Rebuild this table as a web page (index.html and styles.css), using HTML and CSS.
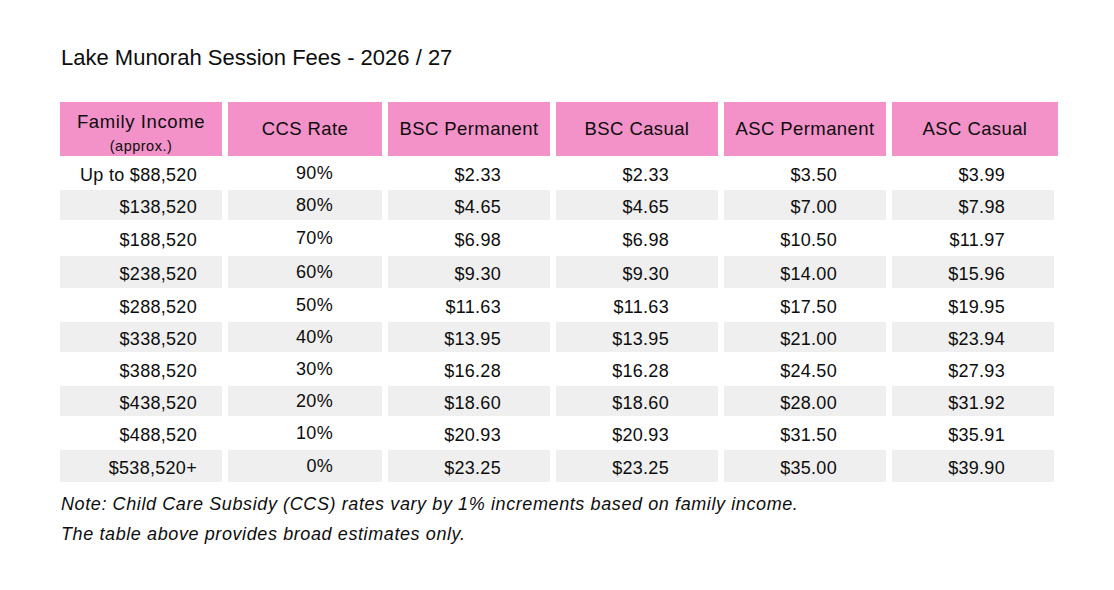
FILE: index.html
```html
<!DOCTYPE html>
<html lang="en">
<head>
<meta charset="utf-8">
<title>Lake Munorah Session Fees - 2026 / 27</title>
<link rel="stylesheet" href="styles.css">
</head>
<body>
<main class="page">
  <h1 class="title">Lake Munorah Session Fees - 2026 / 27</h1>

  <div class="fees">
    <div class="row head">
      <div class="cell hd income"><span class="hd-main">Family Income</span><span class="hd-sub">(approx.)</span></div>
      <div class="cell hd">CCS Rate</div>
      <div class="cell hd">BSC Permanent</div>
      <div class="cell hd">BSC Casual</div>
      <div class="cell hd">ASC Permanent</div>
      <div class="cell hd">ASC Casual</div>
    </div>

    <div class="row">
      <div class="cell inc">Up to $88,520</div><div class="cell rate">90%</div>
      <div class="cell">$2.33</div><div class="cell">$2.33</div><div class="cell">$3.50</div><div class="cell">$3.99</div>
    </div>
    <div class="row alt">
      <div class="cell inc">$138,520</div><div class="cell rate">80%</div>
      <div class="cell">$4.65</div><div class="cell">$4.65</div><div class="cell">$7.00</div><div class="cell">$7.98</div>
    </div>
    <div class="row">
      <div class="cell inc">$188,520</div><div class="cell rate">70%</div>
      <div class="cell">$6.98</div><div class="cell">$6.98</div><div class="cell">$10.50</div><div class="cell">$11.97</div>
    </div>
    <div class="row alt">
      <div class="cell inc">$238,520</div><div class="cell rate">60%</div>
      <div class="cell">$9.30</div><div class="cell">$9.30</div><div class="cell">$14.00</div><div class="cell">$15.96</div>
    </div>
    <div class="row">
      <div class="cell inc">$288,520</div><div class="cell rate">50%</div>
      <div class="cell">$11.63</div><div class="cell">$11.63</div><div class="cell">$17.50</div><div class="cell">$19.95</div>
    </div>
    <div class="row alt">
      <div class="cell inc">$338,520</div><div class="cell rate">40%</div>
      <div class="cell">$13.95</div><div class="cell">$13.95</div><div class="cell">$21.00</div><div class="cell">$23.94</div>
    </div>
    <div class="row">
      <div class="cell inc">$388,520</div><div class="cell rate">30%</div>
      <div class="cell">$16.28</div><div class="cell">$16.28</div><div class="cell">$24.50</div><div class="cell">$27.93</div>
    </div>
    <div class="row alt">
      <div class="cell inc">$438,520</div><div class="cell rate">20%</div>
      <div class="cell">$18.60</div><div class="cell">$18.60</div><div class="cell">$28.00</div><div class="cell">$31.92</div>
    </div>
    <div class="row">
      <div class="cell inc">$488,520</div><div class="cell rate">10%</div>
      <div class="cell">$20.93</div><div class="cell">$20.93</div><div class="cell">$31.50</div><div class="cell">$35.91</div>
    </div>
    <div class="row alt">
      <div class="cell inc">$538,520+</div><div class="cell rate">0%</div>
      <div class="cell">$23.25</div><div class="cell">$23.25</div><div class="cell">$35.00</div><div class="cell">$39.90</div>
    </div>
  </div>

  <div class="notes">
    <p>Note: Child Care Subsidy (CCS) rates vary by 1% increments based on family income.</p>
    <p>The table above provides broad estimates only.</p>
  </div>
</main>
</body>
</html>
```

FILE: styles.css
```css
html, body {
  margin: 0;
  padding: 0;
  background: #ffffff;
}

body {
  font-family: "Liberation Sans", Arial, sans-serif;
  color: #0d0d0d;
}

.page {
  padding: 45px 0 0 61px;
}

.title {
  margin: 0;
  font-size: 22px;
  font-weight: 400;
  line-height: 25px;
  letter-spacing: 0;
}

.fees {
  margin: 32px 0 0 -1px;
  display: grid;
  grid-template-columns: 162px 154px 162px 162px 162px 166px;
  grid-template-rows: 54px 34px 30px 36px 32px 34px 30px 34px 30px 34px 32px;
  column-gap: 6px;
}

.row {
  display: contents;
}

.cell {
  display: flex;
  align-items: center;
  justify-content: flex-end;
  padding: 3px 49px 0 0;
  font-size: 18px;
  line-height: 20px;
  letter-spacing: 0.3px;
  white-space: nowrap;
}

.cell:nth-child(6) {
  margin-right: 4px;
}

.row.alt .cell {
  background: #efefef;
}

.cell.inc {
  padding-right: 25px;
}

.cell.rate {
  padding-top: 0;
  padding-bottom: 1px;
}

.row.head .cell {
  margin-right: 0;
  justify-content: center;
  padding: 0;
  background: #f292c9;
  font-size: 18.5px;
  letter-spacing: 0.4px;
}

.row.head .cell.income {
  flex-direction: column;
  padding-top: 7px;
}

.hd-main {
  display: block;
  line-height: 20px;
  letter-spacing: 0.6px;
}

.hd-sub {
  display: block;
  margin-top: 7px;
  font-size: 14.5px;
  line-height: 14px;
  letter-spacing: 0.5px;
}

.notes {
  margin-top: 7px;
}

.notes p {
  margin: 0;
  font-size: 18px;
  font-style: italic;
  line-height: 30px;
  letter-spacing: 0.6px;
}
```
